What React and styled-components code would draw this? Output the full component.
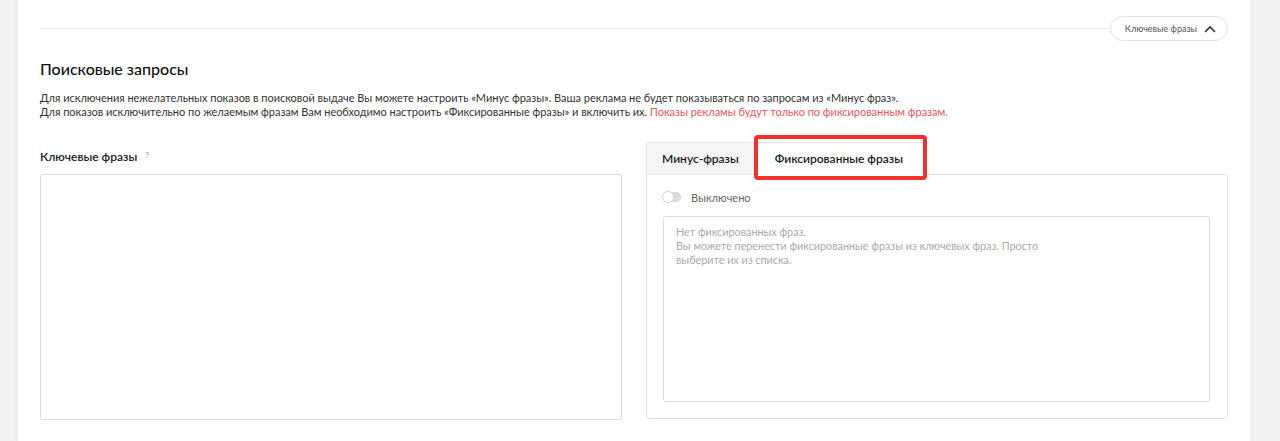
import React from 'react'
import styled, { createGlobalStyle } from 'styled-components'

const Global = createGlobalStyle`
  body {
    margin: 0;
    background: #f2f2f2;
    font-family: Lato, "Open Sans", "Noto Sans", sans-serif;
    color: #222;
  }
`

const Layout = styled.div`
  display: flex;
  height: 441px;
  overflow: hidden;
`

const Gutter = styled.div`
  flex: 0 0 ${p => p.w}px;
  background: #f2f2f2;
`

const Main = styled.main`
  flex: 1;
  background: #fff;
  padding: 16px 22px 0 22px;
  box-shadow: -2px 0 4px rgba(0, 0, 0, 0.03);
`

const TopBar = styled.div`
  display: flex;
  align-items: center;
`

const Divider = styled.div`
  flex: 1;
  height: 1px;
  background: #ececec;
`

const Pill = styled.button`
  display: flex;
  align-items: center;
  gap: 7px;
  height: 25px;
  padding: 0 11px 0 14px;
  border: 1px solid #e2e2e2;
  border-radius: 13px;
  background: #fff;
  font-family: inherit;
  font-size: 9px;
  color: #555;
  cursor: pointer;
`

const Title = styled.h2`
  margin: 18px 0 12px;
  font-size: 16px;
  line-height: 20px;
  font-weight: 500;
  color: #111;
`

const Desc = styled.p`
  margin: 0;
  font-size: 11px;
  letter-spacing: -0.03px;
  line-height: 14px;
  color: #333;
`

const Warn = styled.span`
  color: #e4585c;
`

const Columns = styled.div`
  display: grid;
  grid-template-columns: 1fr 1fr;
  gap: 24px;
  margin-top: 23px;
`

const Column = styled.div`
  display: flex;
  flex-direction: column;
  padding-top: ${p => p.pt || 0}px;
`

const Label = styled.div`
  display: flex;
  align-items: flex-start;
  gap: 8px;
  height: 18px;
  line-height: 18px;
  margin-bottom: 8px;
  font-size: 12px;
  font-weight: 600;
  color: #222;
`

const Hint = styled.span`
  font-size: 8px;
  line-height: 14px;
  color: #999;
`

const Box = styled.div`
  height: ${p => p.h}px;
  border: 1px solid #dcdcdc;
  border-radius: 2px;
  box-sizing: border-box;
  background: #fff;
`

const Tabs = styled.div`
  display: flex;
  height: 32px;
`

const Tab = styled.div`
  position: relative;
  display: flex;
  align-items: center;
  box-sizing: border-box;
  padding: 0 ${p => (p.active ? 20 : 15)}px;
  font-size: 12px;
  font-weight: 600;
  color: #1a1a1a;
  background: ${p => (p.active ? '#fff' : '#f5f5f5')};
  border: 1px solid #e6e6e6;
  border-bottom: ${p => (p.active ? '1px solid #fff' : '1px solid #e6e6e6')};
  border-left: ${p => (p.active ? 'none' : '1px solid #e6e6e6')};
  border-radius: 3px 3px 0 0;
  margin-bottom: -1px;
  z-index: 1;
`

const Highlight = styled.span`
  position: absolute;
  top: -8px;
  left: -1px;
  right: -4px;
  bottom: -6px;
  border: 4px solid #f2302c;
  border-radius: 4px;
  pointer-events: none;
`

const Panel = styled.div`
  height: 245px;
  box-sizing: border-box;
  border: 1px solid #e2e2e2;
  border-radius: 0 3px 3px 3px;
  padding: 15px 17px 0 16px;
`

const SwitchRow = styled.div`
  display: flex;
  align-items: center;
  gap: 10px;
  height: 14px;
  margin-bottom: 12px;
  font-size: 11px;
  color: #666;
`

const Switch = styled.span`
  position: relative;
  width: 18px;
  height: 10px;
  border-radius: 5px;
  background: #dadada;

  &::after {
    content: '';
    position: absolute;
    left: 0;
    top: 0;
    width: 10px;
    height: 10px;
    border-radius: 50%;
    background: #fff;
    box-shadow: 0 0 0 1px #d4d4d4;
  }
`

const Placeholder = styled.div`
  height: 186px;
  box-sizing: border-box;
  border: 1px solid #dcdcdc;
  border-radius: 3px;
  padding: 8px 12px;
  font-size: 10.8px;
  line-height: 14px;
  color: #aaa;
`

function Chevron() {
  return (
    <svg width="12" height="8" viewBox="0 0 12 8" fill="none">
      <path d="M1 7L6 2l5 5" stroke="#333" strokeWidth="1.6" />
    </svg>
  )
}

export default function App() {
  return (
    <Layout>
      <Global />
      <Gutter w={18} />
      <Main>
        <TopBar>
          <Divider />
          <Pill>
            Ключевые фразы
            <Chevron />
          </Pill>
        </TopBar>

        <Title>Поисковые запросы</Title>
        <Desc>
          Для исключения нежелательных показов в поисковой выдаче Вы можете настроить «Минус фразы». Ваша реклама не будет показываться по запросам из «Минус фраз».
          <br />
          Для показов исключительно по желаемым фразам Вам необходимо настроить «Фиксированные фразы» и включить их.{' '}
          <Warn>Показы рекламы будут только по фиксированным фразам.</Warn>
        </Desc>

        <Columns>
          <Column pt={6}>
            <Label>
              Ключевые фразы <Hint>?</Hint>
            </Label>
            <Box h={246} />
          </Column>

          <Column>
            <Tabs>
              <Tab>Минус-фразы</Tab>
              <Tab active>
                Фиксированные фразы
                <Highlight />
              </Tab>
            </Tabs>
            <Panel>
              <SwitchRow>
                <Switch />
                Выключено
              </SwitchRow>
              <Placeholder>
                Нет фиксированных фраз.
                <br />
                Вы можете перенести фиксированные фразы из ключевых фраз. Просто
                <br />
                выберите их из списка.
              </Placeholder>
            </Panel>
          </Column>
        </Columns>
      </Main>
      <Gutter w={30} />
    </Layout>
  )
}
